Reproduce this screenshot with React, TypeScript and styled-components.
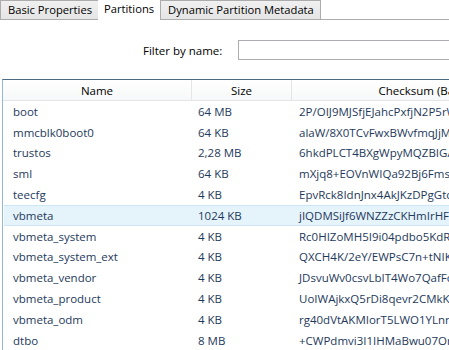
import { FC } from "react"
import styled, { createGlobalStyle } from "styled-components"

const GlobalStyle = createGlobalStyle`
	html, body {
		margin: 0;
		padding: 0;
		background: #ffffff;
		overflow: hidden;
	}
	body {
		font-family: "Open Sans", "Noto Sans", sans-serif;
		font-size: 11.5px;
	}
`

interface Partition {
	name: string
	size: string
	checksum: string
}

const partitions: Partition[] = [
	{ name: "boot", size: "64 MB", checksum: "2P/OIJ9MJSfjEJahcPxfjN2P5rWq8Lk3vT0eX1yQ" },
	{ name: "mmcblk0boot0", size: "64 KB", checksum: "alaW/8X0TCvFwxBWvfmqJjMhR2sK9pQe0Lu" },
	{ name: "trustos", size: "2,28 MB", checksum: "6hkdPLCT4BXgWpyMQZBIGAe5rT1kVn8Ws" },
	{ name: "sml", size: "64 KB", checksum: "mXjq8+EOVnWIQa92Bj6FmsYt3RkP0dLw" },
	{ name: "teecfg", size: "4 KB", checksum: "EpvRck8IdnJnx4AkJKzDPgGtc2Wm7yHq" },
	{ name: "vbmeta", size: "1024 KB", checksum: "jIQDMSiJf6WNZZzCKHmIrHFs4vT9aPqE" },
	{ name: "vbmeta_system", size: "4 KB", checksum: "Rc0HIZoMH5I9i04pdbo5KdRuV8nL2wXc" },
	{ name: "vbmeta_system_ext", size: "4 KB", checksum: "QXCH4K/2eY/EWPsC7n+tNIKa1bZ6oMr" },
	{ name: "vbmeta_vendor", size: "4 KB", checksum: "JDsvuWv0csvLbIT4Wo7QafFc9xKe3Tm" },
	{ name: "vbmeta_product", size: "4 KB", checksum: "UoIWAjkxQ5rDi8qevr2CMkKIh7sN0pYd" },
	{ name: "vbmeta_odm", size: "4 KB", checksum: "rg40dVtAKMIorT5LWO1YLnrGe2jU8fQb" },
	{ name: "dtbo", size: "8 MB", checksum: "+CWPdmvi3I1IHMaBwu07OrZk5tLs9vAx" },
]

const tabs = ["Basic Properties", "Partitions", "Dynamic Partition Metadata"]

const App: FC = () => {
	return (
		<Page>
			<GlobalStyle />
			<TabStrip>
				{tabs.map(tab => (
					<Tab key={tab} $active={tab === "Partitions"}>
						{tab}
					</Tab>
				))}
				<TabFiller />
			</TabStrip>

			<FilterRow>
				<FilterLabel>Filter by name:</FilterLabel>
				<FilterInput type="text" />
			</FilterRow>

			<ListView>
				<HeaderRow>
					<HeaderCell $width={189}>Name</HeaderCell>
					<HeaderCell $width={100}>Size</HeaderCell>
					<HeaderCell $width={278}>Checksum (Base64)</HeaderCell>
				</HeaderRow>
				{partitions.map(p => (
					<Row key={p.name} $selected={p.name === "vbmeta"}>
						<Cell $width={189} $pad={9}>{p.name}</Cell>
						<Cell $width={100} $pad={6}>{p.size}</Cell>
						<Cell $width={278} $pad={7}>{p.checksum}</Cell>
					</Row>
				))}
			</ListView>
		</Page>
	)
}
export default App

const Page = styled.div`
	width: 449px;
	height: 350px;
	overflow: hidden;
	background: #ffffff;
	color: #000000;
`

const TabStrip = styled.div`
	display: flex;
	align-items: flex-end;
	height: 20px;
`

const Tab = styled.div<{ $active: boolean }>`
	flex: none;
	box-sizing: border-box;
	height: 20px;
	padding: 0 6px 0 ${p => (p.$active ? "6px" : "7px")};
	font-size: 11.2px;
	line-height: 18px;
	white-space: nowrap;
	border: 1px solid #acacac;
	border-left: ${p => (p.$active ? "none" : "1px solid #acacac")};
	border-bottom: ${p => (p.$active ? "1px solid #ffffff" : "1px solid #acacac")};
	border-top: ${p => (p.$active ? "none" : "1px solid #acacac")};
	background: ${p => (p.$active ? "#ffffff" : "linear-gradient(#f0f0f0, #e5e5e5)")};
	color: #000000;
	margin-left: -1px;
	&:first-child {
		margin-left: 0;
	}
`

const TabFiller = styled.div`
	flex: 1;
	height: 20px;
	box-sizing: border-box;
	border-bottom: 1px solid #acacac;
`

const FilterRow = styled.div`
	display: flex;
	align-items: center;
	gap: 16px;
	margin-top: 20px;
	padding-left: 143px;
`

const FilterLabel = styled.span`
	flex: none;
	white-space: nowrap;
`

const FilterInput = styled.input`
	flex: none;
	box-sizing: border-box;
	width: 260px;
	height: 20px;
	margin: 0;
	border: 1px solid #abadb3;
	background: #ffffff;
	outline: none;
`

const ListView = styled.div`
	margin: 19px 0 0 2px;
	width: 600px;
	border-top: 1px solid #4c6a84;
	border-left: 1px solid #93b8d4;
`

const HeaderRow = styled.div`
	display: flex;
	height: 21px;
	box-sizing: border-box;
	border-bottom: 1px solid #e5e5e5;
	background: linear-gradient(#ffffff, #f7f8f9);
`

const HeaderCell = styled.div<{ $width: number }>`
	flex: none;
	box-sizing: border-box;
	width: ${p => p.$width}px;
	line-height: 21px;
	text-align: center;
	white-space: nowrap;
	overflow: hidden;
	border-right: 1px solid #e5e5e5;
	color: #000000;
`

const Row = styled.div<{ $selected: boolean }>`
	display: flex;
	align-items: center;
	height: 20.8px;
	box-sizing: border-box;
	margin-left: 1px;
	background: ${p => (p.$selected ? "#e5f3fb" : "transparent")};
	border-top: 1px solid ${p => (p.$selected ? "#cde6f7" : "transparent")};
	border-bottom: 1px solid ${p => (p.$selected ? "#cde6f7" : "transparent")};
`

const Cell = styled.div<{ $width: number; $pad: number }>`
	flex: none;
	box-sizing: border-box;
	width: ${p => p.$width}px;
	padding-left: ${p => p.$pad}px;
	white-space: nowrap;
	overflow: hidden;
	color: #1e395b;
	&:first-child {
		width: ${p => p.$width - 1}px;
	}
`
